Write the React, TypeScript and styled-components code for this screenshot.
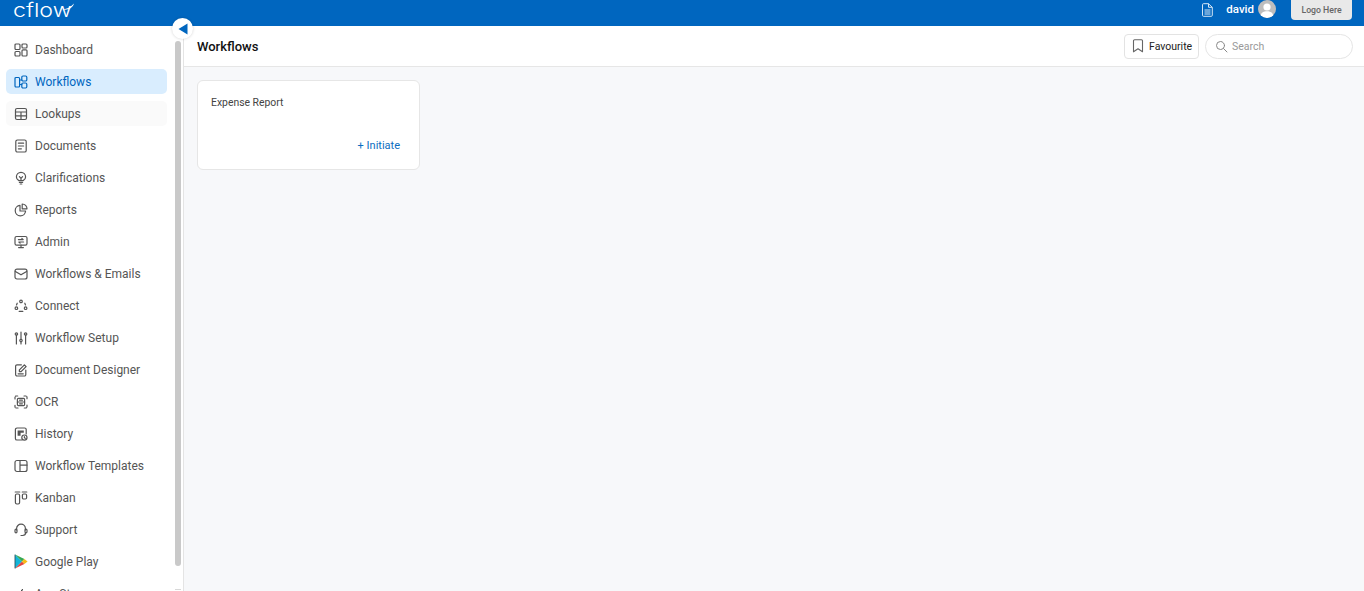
import React, { FC, ReactNode } from 'react';
import styled, { createGlobalStyle } from 'styled-components';

const GlobalStyle = createGlobalStyle`
  html, body {
    margin: 0;
    padding: 0;
    height: 100%;
    overflow: hidden;
    background: #f7f8fa;
    font-family: Roboto, 'Liberation Sans', sans-serif;
  }
  * { box-sizing: border-box; }
`;

const Stroke: FC<{ children: ReactNode }> = ({ children }) => (
  <svg width="14" height="14" viewBox="0 0 14 14" fill="none" stroke="currentColor" strokeWidth="1.2" strokeLinecap="round" strokeLinejoin="round">
    {children}
  </svg>
);

const icons: Record<string, ReactNode> = {
  dashboard: (
    <Stroke>
      <rect x="1" y="1" width="5" height="5.5" rx="1" />
      <rect x="8" y="1" width="5" height="4" rx="1" />
      <rect x="1" y="8.500" width="5" height="4.500" rx="1" />
      <rect x="8" y="6.800" width="5" height="6.200" rx="1" />
    </Stroke>
  ),
  workflows: (
    <Stroke>
      <rect x="1" y="2.500" width="4.600" height="9.500" rx="1" />
      <rect x="7.800" y="1" width="5" height="5" rx="1.200" />
      <rect x="7.800" y="8" width="5" height="5" rx="1.200" />
      <path d="M5.600 5h2.200M5.600 9.500h2.200" />
    </Stroke>
  ),
  lookups: (
    <Stroke>
      <rect x="1.500" y="1.500" width="11" height="11" rx="1.500" />
      <path d="M1.500 5h11M1.500 8.800h11M7 5v7.500" />
    </Stroke>
  ),
  documents: (
    <Stroke>
      <rect x="1.800" y="1" width="10.400" height="12" rx="1.600" />
      <path d="M4.400 4.200h5.200M4.400 7h5.200M4.400 9.800h3" />
    </Stroke>
  ),
  clarifications: (
    <Stroke>
      <path d="M4.900 9.600C3.400 8.800 2.400 7.500 2.400 5.900a4.600 4.600 0 0 1 9.200 0c0 1.600-1 2.900-2.500 3.700z" />
      <path d="M5.400 11.400h3.200M6.200 13h1.600M5.400 5.600 7 7.400l1.600-1.800M7 7.400v2" />
    </Stroke>
  ),
  reports: (
    <Stroke>
      <path d="M6 2.400a5.200 5.200 0 1 0 5.600 5.600H6z" />
      <path d="M8.200 1a4.800 4.800 0 0 1 4.800 4.800H8.200z" />
    </Stroke>
  ),
  admin: (
    <Stroke>
      <rect x="1" y="1.500" width="12" height="8.600" rx="1.600" />
      <path d="M4.600 12.600h4.800M7 10.200v2.400M4.400 4.600h4.800L7.900 3.500M9.600 7H4.800l1.300 1.100" />
    </Stroke>
  ),
  mail: (
    <Stroke>
      <rect x="1" y="2.200" width="12" height="9.800" rx="2" />
      <path d="M1.400 4.400 7 7.800l5.600-3.400" />
    </Stroke>
  ),
  connect: (
    <Stroke>
      <circle cx="7" cy="2.400" r="1.300" />
      <circle cx="2.400" cy="9.200" r="1.300" />
      <circle cx="11.600" cy="9.200" r="1.300" />
      <path d="M3.200 4.200 2.500 6M10.800 4.200l.7 1.800M5.200 12.400h3.600" />
    </Stroke>
  ),
  setup: (
    <Stroke>
      <circle cx="2.400" cy="3" r="1.200" />
      <circle cx="7" cy="9.600" r="1.200" />
      <circle cx="11.600" cy="3" r="1.200" />
      <path d="M2.400 4.200V13M7 1v7.400M7 10.800V13M11.600 4.200V13" />
    </Stroke>
  ),
  designer: (
    <Stroke>
      <path d="M7.400 1.800H3a1.400 1.400 0 0 0-1.400 1.400v8.400A1.400 1.400 0 0 0 3 13h7.400a1.400 1.400 0 0 0 1.400-1.400V7" />
      <path d="M5.400 8.600V6.900l5-5 1.700 1.700-5 5zM4.200 10.800h5" strokeWidth="1.300" />
    </Stroke>
  ),
  ocr: (
    <Stroke>
      <path d="M1 4V2.200A1.200 1.200 0 0 1 2.200 1H4M10 1h1.800A1.200 1.200 0 0 1 13 2.200V4M13 10v1.800a1.200 1.200 0 0 1-1.200 1.200H10M4 13H2.200A1.200 1.200 0 0 1 1 11.800V10" strokeDasharray="2 1" />
      <rect x="3.400" y="3.400" width="7.200" height="7.200" rx="1" />
      <path d="M3.400 7h7.200M5.600 5.200h2.800M5.600 8.800h2.800" />
    </Stroke>
  ),
  history: (
    <Stroke>
      <path d="M8 13H3a1.600 1.600 0 0 1-1.600-1.600V2.600A1.600 1.600 0 0 1 3 1h7.600a1.600 1.600 0 0 1 1.600 1.600V7" />
      <path d="M3.600 3.400h6.200v2.400H6.600v3H3.600z" fill="currentColor" stroke="none" />
      <circle cx="10.400" cy="10.600" r="2.600" />
      <path d="M10.400 9.500v1.200l.9.6" />
    </Stroke>
  ),
  templates: (
    <Stroke>
      <rect x="1" y="1.500" width="12" height="11" rx="2" />
      <path d="M6 1.500v11M6 6.200h7" />
    </Stroke>
  ),
  kanban: (
    <Stroke>
      <path d="M1.200 1h4.600M8.200 1h4.600" />
      <rect x="1.400" y="3" width="4.200" height="10" rx="1.400" />
      <rect x="8.400" y="3" width="4.200" height="5" rx="1.200" />
    </Stroke>
  ),
  support: (
    <Stroke>
      <path d="M2.600 7V5.600a4.400 4.400 0 0 1 8.800 0V7" />
      <rect x="1" y="6.200" width="2" height="3.600" rx="1" />
      <rect x="11" y="6.200" width="2" height="3.600" rx="1" />
      <path d="M11.600 9.800c0 1.800-1.200 2.700-3 2.700H7" />
    </Stroke>
  ),
  play: (
    <svg width="14" height="15" viewBox="0 0 14 15">
      <path d="M1 .6v13.800L8 7.500z" fill="#12b5d8" />
      <path d="M1 .6 8 7.500l2.400-2.400z" fill="#35a853" />
      <path d="M1 14.400 8 7.500l2.400 2.400z" fill="#e2463f" />
      <path d="M10.400 5.100 8 7.500l2.400 2.400 3.200-2.400z" fill="#f7bb16" />
      <path d="M1 .6v13.800" stroke="#31505e" strokeWidth=".9" />
    </svg>
  ),
  apple: (
    <svg width="14" height="14" viewBox="0 0 14 14" fill="#222">
      <path d="M9.800 7.400c0-1.300 1-1.900 1.100-2-.6-.9-1.500-1-1.900-1-.8-.1-1.500.5-1.900.5s-1-.5-1.700-.5c-.9 0-1.700.5-2.100 1.300-.9 1.600-.2 3.900.7 5.200.4.600.9 1.300 1.600 1.300s.9-.4 1.700-.4.9.4 1.700.4 1.100-.7 1.500-1.300c.5-.7.7-1.400.7-1.400s-1.400-.6-1.400-2.100zM8.500 3.500c.3-.4.6-1 .5-1.500-.5 0-1.100.3-1.400.7-.3.4-.6 1-.5 1.500.5 0 1.100-.3 1.400-.7z" />
    </svg>
  ),
};

const navItems = [
  { id: 'dashboard', label: 'Dashboard' },
  { id: 'workflows', label: 'Workflows', active: true },
  { id: 'lookups', label: 'Lookups', hover: true },
  { id: 'documents', label: 'Documents' },
  { id: 'clarifications', label: 'Clarifications' },
  { id: 'reports', label: 'Reports' },
  { id: 'admin', label: 'Admin' },
  { id: 'mail', label: 'Workflows & Emails' },
  { id: 'connect', label: 'Connect' },
  { id: 'setup', label: 'Workflow Setup' },
  { id: 'designer', label: 'Document Designer' },
  { id: 'ocr', label: 'OCR' },
  { id: 'history', label: 'History' },
  { id: 'templates', label: 'Workflow Templates' },
  { id: 'kanban', label: 'Kanban' },
  { id: 'support', label: 'Support' },
  { id: 'play', label: 'Google Play' },
  { id: 'apple', label: 'App Store' },
];

const App: FC = () => {
  return (
    <Page>
      <GlobalStyle />
      <TopBar>
        <Logo>
          <LogoText>cflow</LogoText>
          <LogoSwoosh width="11" height="7" viewBox="0 0 11 7">
            <path d="M0 6.500C4 6 8 4 11 .5 10 4.500 5 7.500 0 6.500z" fill="#fff" />
          </LogoSwoosh>
        </Logo>
        <TopRight>
          <FileIcon width="11" height="14" viewBox="0 0 11 14" fill="none" stroke="#d5e6f5" strokeWidth="1">
            <path d="M1.500.7h5l3.800 3.600v8a1 1 0 0 1-1 1h-7.800a1 1 0 0 1-1-1V1.700a1 1 0 0 1 1-1z" />
            <path d="M6.500.7v3.600h3.800" />
            <path d="M2.500 7h6M2.500 9h6M2.500 11h6" />
          </FileIcon>
          <UserName>david</UserName>
          <Avatar>
            <svg width="18" height="18" viewBox="0 0 18 18">
              <circle cx="9" cy="7" r="3.600" fill="#fff" />
              <path d="M2.800 15.500c.4-3 3-4.200 6.200-4.200s5.800 1.200 6.200 4.200A8.800 8.800 0 0 1 9 18a8.800 8.800 0 0 1-6.200-2.500z" fill="#fff" />
            </svg>
          </Avatar>
          <LogoSlot>Logo Here</LogoSlot>
        </TopRight>
      </TopBar>
      <Body>
        <Sidebar>
          <Collapse>
            <svg width="10" height="12" viewBox="0 0 10 12">
              <path d="M9.500.5v11L.5 6z" fill="#0066bf" />
            </svg>
          </Collapse>
          <Nav>
            {navItems.map((item) => (
              <NavItem key={item.id} $active={item.active} $hover={item.hover}>
                <NavIcon>{icons[item.id]}</NavIcon>
                {item.label}
              </NavItem>
            ))}
          </Nav>
          <ScrollThumb />
          <ScrollArrow />
        </Sidebar>
        <Main>
          <MainHeader>
            <Title>Workflows</Title>
            <Actions>
              <FavouriteButton>
                <svg width="12" height="14" viewBox="0 0 12 14" fill="none" stroke="#666" strokeWidth="1.100" strokeLinejoin="round">
                  <path d="M1.500 1.800a1 1 0 0 1 1-1h7a1 1 0 0 1 1 1v11L6 9.800l-4.500 3z" />
                </svg>
                Favourite
              </FavouriteButton>
              <SearchBox>
                <svg width="13" height="13" viewBox="0 0 13 13" fill="none" stroke="#888" strokeWidth="1" strokeLinecap="round">
                  <circle cx="5.500" cy="5.500" r="4" />
                  <path d="m8.500 8.500 3.500 3.500" />
                </svg>
                <SearchInput placeholder="Search" />
              </SearchBox>
            </Actions>
          </MainHeader>
          <Content>
            <Card>
              <CardTitle>Expense Report</CardTitle>
              <InitiateLink>+ Initiate</InitiateLink>
            </Card>
          </Content>
        </Main>
      </Body>
    </Page>
  );
};

export default App;

const Page = styled.div`
  width: 100%;
  height: 100vh;
  display: flex;
  flex-direction: column;
  overflow: hidden;
`;

const TopBar = styled.header`
  height: 26px;
  flex: none;
  background: #0066bf;
  display: flex;
  align-items: flex-start;
  justify-content: space-between;
  padding: 0 12px 0 13px;
`;

const Logo = styled.div`
  position: relative;
  height: 22px;
  width: 60px;
`;

const LogoText = styled.span`
  font-family: Inter, sans-serif;
  font-weight: 300;
  font-size: 19px;
  line-height: 22px;
  color: #fff;
  display: block;
  transform: scaleX(1.22);
  transform-origin: left center;
`;

const LogoSwoosh = styled.svg`
  position: absolute;
  left: 50px;
  top: 3px;
`;

const TopRight = styled.div`
  display: flex;
  align-items: flex-start;
`;

const FileIcon = styled.svg`
  margin-top: 3px;
  margin-right: 13px;
`;

const UserName = styled.span`
  color: #fff;
  font-size: 11.500px;
  font-weight: 500;
  line-height: 19px;
  margin-right: 4px;
`;

const Avatar = styled.div`
  width: 18px;
  height: 18px;
  border-radius: 50%;
  background: #bdbdbd;
  overflow: hidden;
  margin-right: 15px;
  svg {
    display: block;
  }
`;

const LogoSlot = styled.div`
  width: 61px;
  height: 20px;
  background: #e9e9e9;
  border-radius: 0 0 4px 4px;
  color: #666;
  font-size: 8.700px;
  font-weight: 500;
  line-height: 20px;
  text-align: center;
`;

const Body = styled.div`
  flex: 1;
  min-height: 0;
  display: flex;
`;

const Sidebar = styled.aside`
  position: relative;
  width: 184px;
  flex: none;
  background: #fff;
  border-right: 1px solid #e4e4e4;
`;

const Collapse = styled.button`
  position: absolute;
  left: 172px;
  top: -8px;
  width: 21px;
  height: 21px;
  padding: 0;
  border: 0;
  border-radius: 50%;
  background: #fff;
  box-shadow: 0 0 3px rgba(0, 0, 0, 0.18);
  display: flex;
  align-items: center;
  justify-content: center;
  z-index: 2;
`;

const Nav = styled.nav`
  height: 100%;
  overflow: hidden;
  padding: 11px 16px 0 6px;
  display: flex;
  flex-direction: column;
  gap: 7px;
`;

const NavItem = styled.a<{ $active?: boolean; $hover?: boolean }>`
  height: 25px;
  flex: none;
  display: flex;
  align-items: center;
  gap: 7px;
  padding-left: 8px;
  border-radius: 5px;
  font-size: 12px;
  color: ${({ $active }) => ($active ? '#0066bf' : '#555')};
  background: ${({ $active, $hover }) => ($active ? '#d9edfe' : $hover ? '#fafafa' : 'transparent')};
`;

const NavIcon = styled.span`
  width: 14px;
  height: 15px;
  display: flex;
  align-items: center;
  justify-content: center;
`;

const ScrollThumb = styled.div`
  position: absolute;
  left: 175px;
  top: 15px;
  width: 6px;
  height: 525px;
  background: #c9c9c9;
  border-radius: 3px;
`;

const ScrollArrow = styled.div`
  position: absolute;
  left: 175px;
  bottom: 1px;
  width: 6px;
  height: 1px;
  background: #d8d8d8;
`;

const Main = styled.main`
  flex: 1;
  min-width: 0;
  display: flex;
  flex-direction: column;
`;

const MainHeader = styled.div`
  height: 41px;
  flex: none;
  background: #fff;
  border-bottom: 1px solid #e6e6e6;
  display: flex;
  align-items: center;
  justify-content: space-between;
  padding: 0 11px 0 13px;
`;

const Title = styled.h1`
  margin: 0;
  font-size: 13px;
  font-weight: 500;
  color: #111;
`;

const Actions = styled.div`
  display: flex;
  align-items: center;
  gap: 6px;
`;

const FavouriteButton = styled.button`
  width: 75px;
  height: 25px;
  padding: 0 0 0 7px;
  display: flex;
  align-items: center;
  gap: 5px;
  background: #fff;
  border: 1px solid #e3e3e3;
  border-radius: 4px;
  font-family: inherit;
  font-size: 10.500px;
  font-weight: 400;
  color: #222;
`;

const SearchBox = styled.div`
  width: 148px;
  height: 25px;
  display: flex;
  align-items: center;
  gap: 4px;
  padding-left: 9px;
  border: 1px solid #e5e5e5;
  border-radius: 13px;
  background: #fff;
`;

const SearchInput = styled.input`
  width: 100px;
  border: 0;
  outline: 0;
  padding: 0;
  background: transparent;
  font-family: inherit;
  font-size: 10.500px;
  &::placeholder {
    color: #999;
    opacity: 1;
  }
`;

const Content = styled.div`
  flex: 1;
  background: #f7f8fa;
  padding: 13px;
`;

const Card = styled.div`
  width: 223px;
  height: 90px;
  background: #fff;
  border: 1px solid #e6e6e6;
  border-radius: 6px;
  padding: 15px 19px 17px 13px;
  display: flex;
  flex-direction: column;
  justify-content: space-between;
`;

const CardTitle = styled.div`
  font-size: 10.400px;
  line-height: 13px;
  color: #444;
`;

const InitiateLink = styled.a`
  align-self: flex-end;
  font-size: 11px;
  line-height: 13px;
  color: #0b6dc1;
`;
